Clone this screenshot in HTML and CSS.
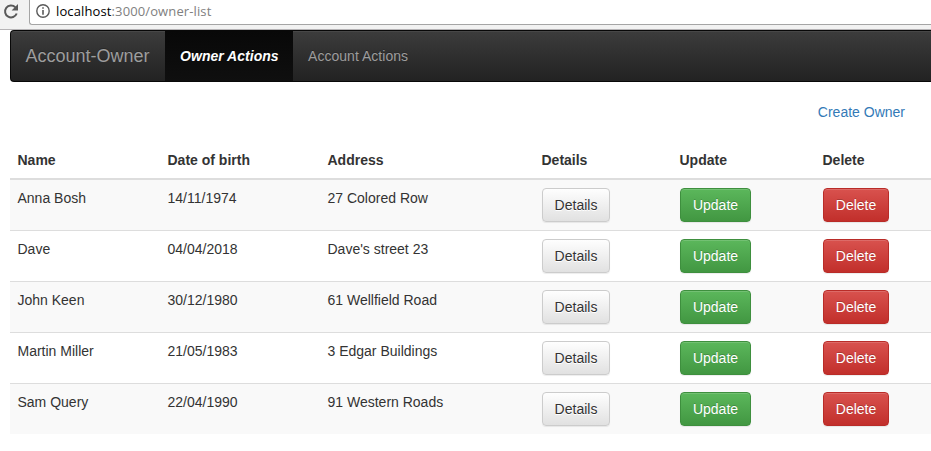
FILE: index.html
```html
<!DOCTYPE html>
<html lang="en">
<head>
<meta charset="utf-8">
<title>Account-Owner</title>
<link rel="stylesheet" href="styles.css">
</head>
<body>
<div class="toolbar">
  <svg class="reload" width="18" height="20" viewBox="0 0 18 20"><path d="M13.3 6.2A6 6 0 1 0 14.7 12.5" fill="none" stroke="#5a5a5a" stroke-width="2"/><path d="M16 3v6.4H9.6z" fill="#5a5a5a"/></svg>
  <div class="address">
    <svg class="info" width="14" height="14" viewBox="0 0 14 14"><circle cx="7" cy="7" r="6.2" fill="none" stroke="#5a5a5a" stroke-width="1.4"/><path d="M6.2 3.2h1.6v1.6H6.2zM6.2 6h1.6v4.8H6.2z" fill="#5a5a5a"/></svg>
    <span class="url"><span class="host">localhost</span>:3000/owner-list</span>
  </div>
</div>
<nav class="navbar">
  <a class="brand">Account-Owner</a>
  <a class="nav-link active">Owner Actions</a>
  <a class="nav-link">Account Actions</a>
</nav>
<div class="create"><a>Create Owner</a></div>
<table class="table">
  <colgroup><col class="c-name"><col class="c-date"><col class="c-address"><col class="c-details"><col class="c-update"><col></colgroup>
  <thead><tr><th>Name</th><th>Date of birth</th><th>Address</th><th>Details</th><th>Update</th><th>Delete</th></tr></thead>
  <tbody>
    <tr><td>Anna Bosh</td><td>14/11/1974</td><td>27 Colored Row</td><td><button class="btn default">Details</button></td><td><button class="btn success">Update</button></td><td><button class="btn danger">Delete</button></td></tr>
    <tr><td>Dave</td><td>04/04/2018</td><td>Dave's street 23</td><td><button class="btn default">Details</button></td><td><button class="btn success">Update</button></td><td><button class="btn danger">Delete</button></td></tr>
    <tr><td>John Keen</td><td>30/12/1980</td><td>61 Wellfield Road</td><td><button class="btn default">Details</button></td><td><button class="btn success">Update</button></td><td><button class="btn danger">Delete</button></td></tr>
    <tr><td>Martin Miller</td><td>21/05/1983</td><td>3 Edgar Buildings</td><td><button class="btn default">Details</button></td><td><button class="btn success">Update</button></td><td><button class="btn danger">Delete</button></td></tr>
    <tr><td>Sam Query</td><td>22/04/1990</td><td>91 Western Roads</td><td><button class="btn default">Details</button></td><td><button class="btn success">Update</button></td><td><button class="btn danger">Delete</button></td></tr>
  </tbody>
</table>
</body>
</html>
```
FILE: styles.css
```css
* { box-sizing: border-box; }
body {
  margin: 0;
  overflow: hidden;
  background: #fff;
  color: #333;
  font: 14px/20px "Liberation Sans", Arial, sans-serif;
}
.toolbar {
  display: flex;
  height: 30px;
  background: #f2f2f2;
  border-bottom: 1px solid #b6b4b6;
}
.reload { flex: none; width: 18px; margin: 1px 9px 0 2px; }
.address {
  flex: 1;
  display: flex;
  align-items: center;
  height: 25px;
  padding: 0 0 2px 6px;
  background: #fff;
  border: solid #a5a5a5;
  border-width: 0 0 1px 1px;
  border-bottom-left-radius: 3px;
}
.info { flex: none; margin-right: 6px; }
.url {
  font: 13px/18px "Open Sans", sans-serif;
  letter-spacing: .12px;
  color: #808080;
  white-space: nowrap;
}
.host { color: #000; }
.navbar {
  display: flex;
  height: 52px;
  margin-left: 10px;
  border: 1px solid #080808;
  border-right: 0;
  border-radius: 4px 0 0 4px;
  background: linear-gradient(#3c3c3c, #222);
  box-shadow: inset 0 1px 0 rgba(255, 255, 255, .06);
  color: #9d9d9d;
  text-shadow: 0 -1px 0 rgba(0, 0, 0, .25);
}
.brand { padding: 15px 15.5px 15px 14.5px; font-size: 18px; }
.nav-link { padding: 15px; letter-spacing: .02px; }
.nav-link.active {
  padding-right: 14.5px;
  color: #fff;
  font-weight: bold;
  font-style: italic;
  background: linear-gradient(#080808, #0f0f0f);
}
.create {
  margin: 20px 26px 20px 0;
  text-align: right;
  color: #337ab7;
}
.table {
  width: 921px;
  margin-left: 10px;
  table-layout: fixed;
  border-spacing: 0;
}
.c-name { width: 150px; }
.c-date { width: 160px; }
.c-address { width: 214px; }
.c-details { width: 138px; }
.c-update { width: 143px; }
th, td { padding: 8px 8px 8px 7.5px; text-align: left; vertical-align: top; }
td:nth-child(n+4) { padding-left: 8px; }
th { border-bottom: 2px solid #ddd; }
td { border-top: 1px solid #ddd; }
tbody tr:first-child td { border-top: 0; }
tbody tr:nth-child(odd) { background: #f9f9f9; }
.btn {
  display: block;
  height: 34px;
  padding: 6px 11.5px;
  border: 1px solid #ccc;
  border-radius: 4px;
  font: inherit;
  white-space: nowrap;
  box-shadow: inset 0 1px 0 rgba(255, 255, 255, .15), 0 1px 1px rgba(0, 0, 0, .075);
}
.default {
  width: 68px;
  color: #333;
  background: linear-gradient(#fff, #e0e0e0) border-box;
  text-shadow: 0 1px 0 #fff;
}
.success {
  width: 71px;
  color: #fff;
  background: linear-gradient(#5cb85c, #419641) border-box;
  border-color: #3e8f3e;
  text-shadow: 0 -1px 0 rgba(0, 0, 0, .2);
}
.danger {
  width: 66px;
  color: #fff;
  background: linear-gradient(#d9534f, #c12e2a) border-box;
  border-color: #b92c28;
  text-shadow: 0 -1px 0 rgba(0, 0, 0, .2);
}
```
